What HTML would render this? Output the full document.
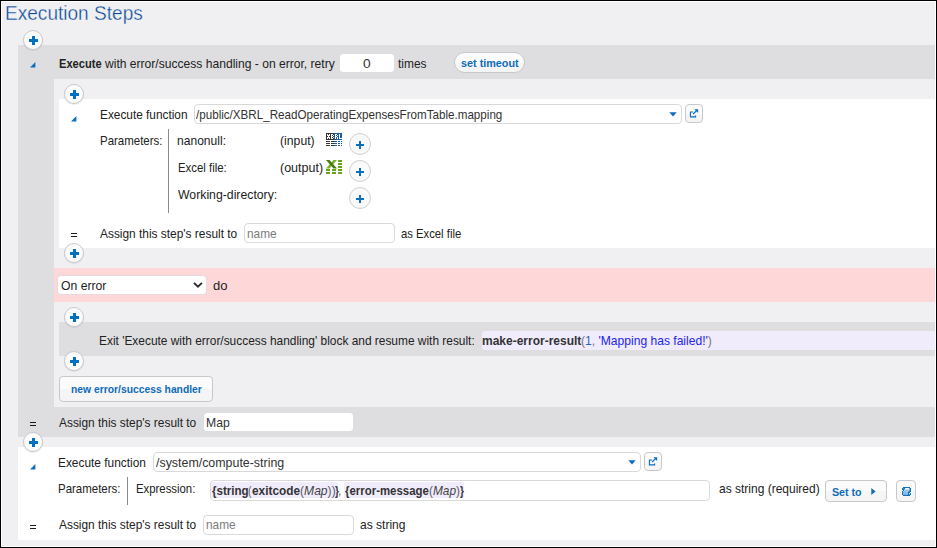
<!DOCTYPE html>
<html><head><meta charset='utf-8'><title>Execution Steps</title>
<style>
html,body{margin:0;padding:0;}
body{width:937px;height:548px;overflow:hidden;background:#000;position:relative;font-family:"Liberation Sans", sans-serif;color:#222;}
.abs{position:absolute;}
#w{position:absolute;left:1px;top:1px;width:935px;height:546px;background:#fff;}
#c{position:absolute;left:2px;top:2px;width:933px;height:544px;background:#f0f0f2;overflow:hidden;}
#o{position:absolute;left:-2px;top:-2px;width:937px;height:548px;}
.b{position:absolute;}
.t{position:absolute;white-space:nowrap;transform-origin:0 0;}
.t b{font-weight:bold;}
.pc{position:absolute;width:18px;height:18px;border:1px solid #c9c9cb;border-radius:50%;background:#fbfbfb;box-shadow:0 1px 1px rgba(0,0,0,0.08);}
.pc svg{position:absolute;left:-1px;top:-1px;}
.pc2{position:absolute;width:20px;height:20px;border:1px solid #cfcfd1;border-radius:50%;background:#f9f9f9;}
.pc2 svg{position:absolute;left:-1px;top:-1px;}
.inp{position:absolute;background:#fff;border-radius:3.5px;box-sizing:border-box;}
.bd{border:1px solid #d9d9dc;border-radius:4px;}
.btn{position:absolute;box-sizing:border-box;border:1px solid #c8c8c8;background:linear-gradient(#fbfbfb 0%,#fbfbfb 50%,#f5f5f5 51%,#f5f5f5 100%);}
</style></head><body>
<div id='w'></div><div id='c'><div id='o'>

<div class='b' style='left:18px;top:45px;width:920px;height:391.5px;background:#dedee0'></div>
<div class='b' style='left:54px;top:79px;width:890px;height:328px;background:#f0f0f2'></div>
<div class='b' style='left:59px;top:99px;width:890px;height:149px;background:#fff'></div>
<div class='b' style='left:54px;top:268px;width:890px;height:34px;background:#fed8d8'></div>
<div class='b' style='left:59px;top:322px;width:890px;height:33.5px;background:#dedee0'></div>
<div class='b' style='left:482px;top:331px;width:460px;height:19px;background:#f0ecfc;border-radius:3px 0 0 3px'></div>
<div class='b' style='left:18px;top:447px;width:920px;height:93px;background:#fff'></div>
<div class='inp' style='left:340px;top:54px;width:54px;height:18px'></div>
<div class='btn' style='left:454px;top:52px;width:71px;height:20.5px;border-radius:10.5px'></div>
<div class='inp bd' style='left:194px;top:104px;width:487.6px;height:20px'></div>
<svg class='abs' style='left:669.4px;top:112px' width='8' height='5' viewBox='0 0 8 5'><path d='M0.3 0.3H7.7L4 4.6Z' fill='#0e6cba'/></svg>
<div class='btn' style='left:685.2px;top:104.1px;width:17.7px;height:19px;border-radius:4px'></div><svg class='abs' style='left:689.00px;top:108.30px' width='11' height='11' viewBox='0 0 11 11'><path d='M4 4H1.45V8.9H6.55V7.4' stroke='#0a6fc0' stroke-width='1.15' fill='none'/><path d='M4.1 6L8.3 1.9' stroke='#0a6fc0' stroke-width='1.25' fill='none'/><path d='M5.4 1.3H9.1V5.1Z' fill='#0a6fc0'/></svg>
<div class='b' style='left:168px;top:129px;width:1px;height:83.5px;background:#8a8a8a'></div>
<svg class='abs' style='left:326px;top:133px' width='16' height='14' viewBox='0 0 16 14' shape-rendering='crispEdges'>
<rect x='0' y='0' width='8' height='7' fill='#333'/><rect x='8' y='0' width='8' height='7' fill='#1a5c9c'/>
<g fill='#fff'>
<path d='M1 1h1v1h1v-1h1v2h-1v1h1v2h-1v-1h-1v1h-1v-2h1v-1h-1z'/>
<path d='M5 1h2v1h1v1h-1v1h1v1h-1v1h-2zM6 2v1h1v-1zM6 4v1h1v-1z'/>
<path d='M9 1h2v1h1v1h-1v1h1v2h-1v-2h-1v2h-1zM10 2v1h1v-1z'/>
<path d='M13 1h1v4h2v1h-3z'/>
</g>
<g fill='#333'><rect x='0' y='8' width='4' height='1'/><rect x='5' y='8' width='3' height='1'/><rect x='0' y='10' width='4' height='1'/><rect x='5' y='10' width='3' height='1'/><rect x='0' y='12' width='4' height='1'/><rect x='5' y='12' width='3' height='1'/></g>
<g fill='#1a5c9c'><rect x='8' y='8' width='3' height='1'/><rect x='12' y='8' width='2' height='1'/><rect x='15' y='8' width='1' height='1'/><rect x='8' y='10' width='3' height='1'/><rect x='12' y='10' width='2' height='1'/><rect x='15' y='10' width='1' height='1'/><rect x='8' y='12' width='3' height='1'/><rect x='12' y='12' width='2' height='1'/><rect x='15' y='12' width='1' height='1'/></g>
</svg>
<svg class='abs' style='left:326px;top:160px' width='16' height='14' viewBox='0 0 16 14'>
<path d='M7.5 0H11L3.5 8.5H0Z' fill='#7fb02c'/>
<path d='M0 0H3.5L11 8.5H7.5Z' fill='#4c7a12'/>
<g fill='#6aa31c' shape-rendering='crispEdges'>
<rect x='12' y='0' width='4' height='2'/><rect x='12' y='3' width='4' height='2'/><rect x='12' y='6' width='4' height='2'/><rect x='12' y='9' width='4' height='2'/><rect x='12' y='12' width='4' height='2'/>
<rect x='0' y='9' width='4' height='2'/><rect x='6' y='9' width='4' height='2'/>
<rect x='0' y='12' width='4' height='2'/><rect x='6' y='12' width='4' height='2'/>
</g></svg>
<div class='pc2' style='left:349px;top:133px'><svg width='22' height='22' viewBox='0 0 22 22'><path d='M10 8h2v3h3v2h-3v3h-2v-3h-3v-2h3z' fill='#0a6fc0'/></svg></div>
<div class='pc2' style='left:349px;top:160px'><svg width='22' height='22' viewBox='0 0 22 22'><path d='M10 8h2v3h3v2h-3v3h-2v-3h-3v-2h3z' fill='#0a6fc0'/></svg></div>
<div class='pc2' style='left:349px;top:187px'><svg width='22' height='22' viewBox='0 0 22 22'><path d='M10 8h2v3h3v2h-3v3h-2v-3h-3v-2h3z' fill='#0a6fc0'/></svg></div>
<div class='inp bd' style='left:244px;top:223px;width:150.6px;height:20px'></div>
<div class='inp' style='left:57.4px;top:275.4px;width:149.2px;height:19.3px;border:1px solid #e6dadf;border-radius:4px'></div>
<svg class='abs' style='left:192px;top:281px' width='12' height='9' viewBox='0 0 12 9'><path d='M1.97 1.87L5.95 5.76L9.93 1.87' stroke='#2b2b2b' stroke-width='1.9' fill='none'/></svg>
<div class='btn' style='left:59px;top:376px;width:153.5px;height:25.5px;border-radius:4px'></div>
<div class='inp' style='left:204px;top:413px;width:149px;height:18px'></div>
<div class='inp bd' style='left:153.2px;top:452px;width:487.5px;height:20px'></div>
<svg class='abs' style='left:628.1px;top:460px' width='8' height='5' viewBox='0 0 8 5'><path d='M0.3 0.3H7.7L4 4.6Z' fill='#0e6cba'/></svg>
<div class='btn' style='left:644.3px;top:452.1px;width:17.7px;height:19px;border-radius:4px'></div><svg class='abs' style='left:648.10px;top:456.30px' width='11' height='11' viewBox='0 0 11 11'><path d='M4 4H1.45V8.9H6.55V7.4' stroke='#0a6fc0' stroke-width='1.15' fill='none'/><path d='M4.1 6L8.3 1.9' stroke='#0a6fc0' stroke-width='1.25' fill='none'/><path d='M5.4 1.3H9.1V5.1Z' fill='#0a6fc0'/></svg>
<div class='b' style='left:127px;top:477px;width:1px;height:28px;background:#8a8a8a'></div>
<div class='inp bd' style='left:210px;top:480px;width:499.5px;height:21px'></div>
<div class='b' style='left:211.2px;top:482px;width:126.6px;height:16px;background:#f0ecfc'></div>
<div class='b' style='left:344.2px;top:482px;width:119.7px;height:16px;background:#f0ecfc'></div>
<div class='btn' style='left:825px;top:480px;width:61.5px;height:22px;border-radius:4px'></div>
<svg class='abs' style='left:871px;top:488px' width='5' height='7' viewBox='0 0 5 7'><path d='M0.3 0L4.6 3.5L0.3 7Z' fill='#0e6cba'/></svg>
<div class='btn' style='left:896px;top:480px;width:20px;height:22px;border-radius:4px'></div><svg class='abs' style='left:902px;top:487px' width='9' height='9' viewBox='0 0 9 9' shape-rendering='crispEdges'><rect x='1' y='0' width='1' height='1' fill='#0f6fc0'/><rect x='2' y='0' width='1' height='1' fill='#0f6fc0'/><rect x='3' y='0' width='1' height='1' fill='#0f6fc0'/><rect x='4' y='0' width='1' height='1' fill='#0f6fc0'/><rect x='5' y='0' width='1' height='1' fill='#0f6fc0'/><rect x='6' y='0' width='1' height='1' fill='#0f6fc0'/><rect x='7' y='0' width='1' height='1' fill='#0f6fc0'/><rect x='0' y='1' width='1' height='1' fill='#0f6fc0'/><rect x='1' y='1' width='1' height='1' fill='#4f97d4'/><rect x='2' y='1' width='1' height='1' fill='#0f6fc0'/><rect x='3' y='1' width='1' height='1' fill='#eef5fc'/><rect x='4' y='1' width='1' height='1' fill='#eef5fc'/><rect x='5' y='1' width='1' height='1' fill='#eef5fc'/><rect x='6' y='1' width='1' height='1' fill='#eef5fc'/><rect x='7' y='1' width='1' height='1' fill='#4f97d4'/><rect x='8' y='1' width='1' height='1' fill='#0f6fc0'/><rect x='0' y='2' width='1' height='1' fill='#0f6fc0'/><rect x='1' y='2' width='1' height='1' fill='#0f6fc0'/><rect x='2' y='2' width='1' height='1' fill='#8fbde6'/><rect x='3' y='2' width='1' height='1' fill='#c4dcf2'/><rect x='4' y='2' width='1' height='1' fill='#c4dcf2'/><rect x='5' y='2' width='1' height='1' fill='#c4dcf2'/><rect x='6' y='2' width='1' height='1' fill='#c4dcf2'/><rect x='7' y='2' width='1' height='1' fill='#8fbde6'/><rect x='8' y='2' width='1' height='1' fill='#0f6fc0'/><rect x='1' y='3' width='1' height='1' fill='#0f6fc0'/><rect x='2' y='3' width='1' height='1' fill='#9cc6ea'/><rect x='3' y='3' width='1' height='1' fill='#9cc6ea'/><rect x='4' y='3' width='1' height='1' fill='#9cc6ea'/><rect x='5' y='3' width='1' height='1' fill='#9cc6ea'/><rect x='6' y='3' width='1' height='1' fill='#9cc6ea'/><rect x='7' y='3' width='1' height='1' fill='#6ea9dd'/><rect x='8' y='3' width='1' height='1' fill='#0f6fc0'/><rect x='0' y='4' width='1' height='1' fill='#0f6fc0'/><rect x='1' y='4' width='1' height='1' fill='#9cc6ea'/><rect x='2' y='4' width='1' height='1' fill='#9cc6ea'/><rect x='3' y='4' width='1' height='1' fill='#9cc6ea'/><rect x='4' y='4' width='1' height='1' fill='#9cc6ea'/><rect x='5' y='4' width='1' height='1' fill='#9cc6ea'/><rect x='6' y='4' width='1' height='1' fill='#6ea9dd'/><rect x='7' y='4' width='1' height='1' fill='#0f6fc0'/><rect x='8' y='4' width='1' height='1' fill='#0f6fc0'/><rect x='0' y='5' width='1' height='1' fill='#0f6fc0'/><rect x='1' y='5' width='1' height='1' fill='#86b9e5'/><rect x='2' y='5' width='1' height='1' fill='#86b9e5'/><rect x='3' y='5' width='1' height='1' fill='#86b9e5'/><rect x='4' y='5' width='1' height='1' fill='#86b9e5'/><rect x='5' y='5' width='1' height='1' fill='#86b9e5'/><rect x='6' y='5' width='1' height='1' fill='#0f6fc0'/><rect x='7' y='5' width='1' height='1' fill='#0f6fc0'/><rect x='0' y='6' width='1' height='1' fill='#0f6fc0'/><rect x='1' y='6' width='1' height='1' fill='#86b9e5'/><rect x='2' y='6' width='1' height='1' fill='#86b9e5'/><rect x='3' y='6' width='1' height='1' fill='#86b9e5'/><rect x='4' y='6' width='1' height='1' fill='#86b9e5'/><rect x='5' y='6' width='1' height='1' fill='#86b9e5'/><rect x='6' y='6' width='1' height='1' fill='#0f6fc0'/><rect x='8' y='6' width='1' height='1' fill='#0f6fc0'/><rect x='0' y='7' width='1' height='1' fill='#0f6fc0'/><rect x='1' y='7' width='1' height='1' fill='#74aee0'/><rect x='2' y='7' width='1' height='1' fill='#74aee0'/><rect x='3' y='7' width='1' height='1' fill='#74aee0'/><rect x='4' y='7' width='1' height='1' fill='#74aee0'/><rect x='5' y='7' width='1' height='1' fill='#74aee0'/><rect x='6' y='7' width='1' height='1' fill='#0f6fc0'/><rect x='7' y='7' width='1' height='1' fill='#4f97d4'/><rect x='8' y='7' width='1' height='1' fill='#0f6fc0'/><rect x='1' y='8' width='1' height='1' fill='#0f6fc0'/><rect x='2' y='8' width='1' height='1' fill='#0f6fc0'/><rect x='3' y='8' width='1' height='1' fill='#0f6fc0'/><rect x='4' y='8' width='1' height='1' fill='#0f6fc0'/><rect x='5' y='8' width='1' height='1' fill='#0f6fc0'/><rect x='6' y='8' width='1' height='1' fill='#0f6fc0'/><rect x='7' y='8' width='1' height='1' fill='#0f6fc0'/></svg>
<div class='inp bd' style='left:203px;top:515px;width:150.6px;height:20px'></div>
<div class='pc' style='left:23px;top:30px'><svg width='20' height='20' viewBox='0 0 20 20' shape-rendering='crispEdges'><path d='M9 6h3v3h3v3h-3v3h-3v-3h-3v-3h3z' fill='#0070c0'/></svg></div>
<div class='pc' style='left:64px;top:84px'><svg width='20' height='20' viewBox='0 0 20 20' shape-rendering='crispEdges'><path d='M9 6h3v3h3v3h-3v3h-3v-3h-3v-3h3z' fill='#0070c0'/></svg></div>
<div class='pc' style='left:64px;top:243px'><svg width='20' height='20' viewBox='0 0 20 20' shape-rendering='crispEdges'><path d='M9 6h3v3h3v3h-3v3h-3v-3h-3v-3h3z' fill='#0070c0'/></svg></div>
<div class='pc' style='left:64px;top:307px'><svg width='20' height='20' viewBox='0 0 20 20' shape-rendering='crispEdges'><path d='M9 6h3v3h3v3h-3v3h-3v-3h-3v-3h3z' fill='#0070c0'/></svg></div>
<div class='pc' style='left:64px;top:351px'><svg width='20' height='20' viewBox='0 0 20 20' shape-rendering='crispEdges'><path d='M9 6h3v3h3v3h-3v3h-3v-3h-3v-3h3z' fill='#0070c0'/></svg></div>
<div class='pc' style='left:23px;top:432px'><svg width='20' height='20' viewBox='0 0 20 20' shape-rendering='crispEdges'><path d='M9 6h3v3h3v3h-3v3h-3v-3h-3v-3h3z' fill='#0070c0'/></svg></div>
<svg class='abs' style='left:29.7px;top:62px' width='6' height='6' viewBox='0 0 6 6'><path d='M5.4 0V5.4H0Z' fill='#0a6fc0'/></svg>
<svg class='abs' style='left:70.8px;top:115.8px' width='6' height='6' viewBox='0 0 6 6'><path d='M5.4 0V5.4H0Z' fill='#0a6fc0'/></svg>
<svg class='abs' style='left:29.8px;top:463.9px' width='6' height='6' viewBox='0 0 6 6'><path d='M5.4 0V5.4H0Z' fill='#0a6fc0'/></svg>
<div class='abs' style='left:71px;top:233px;width:6.2px;height:1px;background:#1a1a1a'></div><div class='abs' style='left:71px;top:236px;width:6.2px;height:1px;background:#1a1a1a'></div>
<div class='abs' style='left:30px;top:422px;width:6.2px;height:1px;background:#1a1a1a'></div><div class='abs' style='left:30px;top:425px;width:6.2px;height:1px;background:#1a1a1a'></div>
<div class='abs' style='left:30px;top:525px;width:6.2px;height:1px;background:#1a1a1a'></div><div class='abs' style='left:30px;top:528px;width:6.2px;height:1px;background:#1a1a1a'></div>
<div class='t' id='t0' style='left:5.09px;top:1.27px;font-size:20.7px;line-height:23.122px;transform:scaleX(0.9215);color:#0b4a96;-webkit-text-stroke:0.35px #f0f0f2;'>Execution Steps</div>
<div class='t' id='t1' style='left:59.02px;top:57.23px;font-size:13px;line-height:14.521px;transform:scaleX(0.8539);'><b>Execute</b></div>
<div class='t' id='t2' style='left:105.44px;top:57.23px;font-size:13px;line-height:14.521px;transform:scaleX(0.9297);'>with error/success handling - on error, retry</div>
<div class='t' id='t3' style='left:398.27px;top:57.23px;font-size:13px;line-height:14.521px;transform:scaleX(0.9170);'>times</div>
<div class='t' id='t4' style='left:363.22px;top:57.23px;font-size:13px;line-height:14.521px;transform:scaleX(1.0586);color:#333;'>0</div>
<div class='t' id='t5' style='left:461.38px;top:57.23px;font-size:10.8px;line-height:12.064px;transform:scaleX(1.0011);color:#0e6cba;font-weight:bold;'>set timeout</div>
<div class='t' id='t6' style='left:99.62px;top:108.23px;font-size:13px;line-height:14.521px;transform:scaleX(0.9100);'>Execute function</div>
<div class='t' id='t7' style='left:196.33px;top:108.23px;font-size:13px;line-height:14.521px;transform:scaleX(0.8943);color:#333;'>/public/XBRL_ReadOperatingExpensesFromTable.mapping</div>
<div class='t' id='t8' style='left:99.76px;top:133.94px;font-size:13px;line-height:14.521px;transform:scaleX(0.8824);'>Parameters:</div>
<div class='t' id='t9' style='left:176.99px;top:133.94px;font-size:13px;line-height:14.521px;transform:scaleX(0.9285);'>nanonull:</div>
<div class='t' id='t10' style='left:280.16px;top:133.94px;font-size:13px;line-height:14.521px;transform:scaleX(0.9416);'>(input)</div>
<div class='t' id='t11' style='left:177.51px;top:160.74px;font-size:13px;line-height:14.521px;transform:scaleX(0.8759);'>Excel file:</div>
<div class='t' id='t12' style='left:280.07px;top:160.74px;font-size:13px;line-height:14.521px;transform:scaleX(0.9606);'>(output)</div>
<div class='t' id='t13' style='left:178.32px;top:187.74px;font-size:13px;line-height:14.521px;transform:scaleX(0.9429);'>Working-directory:</div>
<div class='t' id='t14' style='left:100.04px;top:227.24px;font-size:13px;line-height:14.521px;transform:scaleX(0.9152);'>Assign this step's result to</div>
<div class='t' id='t15' style='left:246.65px;top:227.24px;font-size:13px;line-height:14.521px;transform:scaleX(0.9115);color:#7c7c7c;'>name</div>
<div class='t' id='t16' style='left:400.74px;top:227.24px;font-size:13px;line-height:14.521px;transform:scaleX(0.8677);'>as Excel file</div>
<div class='t' id='t17' style='left:61.19px;top:278.74px;font-size:13px;line-height:14.521px;transform:scaleX(0.9371);'>On error</div>
<div class='t' id='t18' style='left:212.84px;top:278.74px;font-size:13px;line-height:14.521px;transform:scaleX(1.0012);'>do</div>
<div class='t' id='t19' style='left:99.46px;top:333.74px;font-size:13px;line-height:14.521px;transform:scaleX(0.9157);'>Exit 'Execute with error/success handling' block and resume with result:</div>
<div class='t' id='t20' style='left:482.01px;top:333.74px;font-size:13px;line-height:14.521px;transform:scaleX(0.9222);'><b style='color:#333'>make-error-result</b></div>
<div class='t' id='t21' style='left:581.02px;top:333.74px;font-size:13px;line-height:14.521px;transform:scaleX(0.9289);'><span style='color:#777'>(</span><span style='color:#2a62b8'>1</span><span style='color:#777'>, </span><span style='color:#2424ee'>'Mapping has failed!'</span><span style='color:#777'>)</span></div>
<div class='t' id='t22' style='left:71.07px;top:382.73px;font-size:10.8px;line-height:12.064px;transform:scaleX(0.9565);color:#0e6cba;font-weight:bold;'>new error/success handler</div>
<div class='t' id='t23' style='left:59.30px;top:416.24px;font-size:13px;line-height:14.521px;transform:scaleX(0.9152);'>Assign this step's result to</div>
<div class='t' id='t24' style='left:205.85px;top:416.24px;font-size:13px;line-height:14.521px;transform:scaleX(0.9365);color:#333;'>Map</div>
<div class='t' id='t25' style='left:58.47px;top:455.84px;font-size:13px;line-height:14.521px;transform:scaleX(0.9145);'>Execute function</div>
<div class='t' id='t26' style='left:155.82px;top:455.84px;font-size:13px;line-height:14.521px;transform:scaleX(0.9539);color:#333;'>/system/compute-string</div>
<div class='t' id='t27' style='left:58.38px;top:482.24px;font-size:13px;line-height:14.521px;transform:scaleX(0.8824);'>Parameters:</div>
<div class='t' id='t28' style='left:135.88px;top:482.24px;font-size:13px;line-height:14.521px;transform:scaleX(0.8736);'>Expression:</div>
<div class='t' id='t29' style='left:212.30px;top:484.24px;font-size:13px;line-height:14.521px;transform:scaleX(0.8905);'><b style='color:#333'>{string</b></div>
<div class='t' id='t30' style='left:248.08px;top:484.24px;font-size:13px;line-height:14.521px;transform:scaleX(0.7800);color:#5c5c66;'>(</div>
<div class='t' id='t31' style='left:252.00px;top:484.24px;font-size:13px;line-height:14.521px;transform:scaleX(0.9104);'><b style='color:#333'>exitcode</b></div>
<div class='t' id='t32' style='left:299.66px;top:484.24px;font-size:13px;line-height:14.521px;transform:scaleX(0.9312);color:#5c5c66;'>(<i style='color:#444'>Map</i>))</div>
<div class='t' id='t33' style='left:334.90px;top:484.24px;font-size:13px;line-height:14.521px;transform:scaleX(0.7800);'><b style='color:#333'>}</b></div>
<div class='t' id='t34' style='left:337.51px;top:484.24px;font-size:13px;line-height:14.521px;transform:scaleX(0.9000);color:#5c5c66;'>,</div>
<div class='t' id='t35' style='left:345.42px;top:484.24px;font-size:13px;line-height:14.521px;transform:scaleX(0.8793);'><b style='color:#333'>{error-message</b></div>
<div class='t' id='t36' style='left:429.03px;top:484.24px;font-size:13px;line-height:14.521px;transform:scaleX(0.9120);color:#5c5c66;'>(<i style='color:#444'>Map</i>)</div>
<div class='t' id='t37' style='left:460.40px;top:484.24px;font-size:13px;line-height:14.521px;transform:scaleX(0.7800);'><b style='color:#333'>}</b></div>
<div class='t' id='t38' style='left:718.59px;top:482.24px;font-size:13px;line-height:14.521px;transform:scaleX(0.9225);'>as string (required)</div>
<div class='t' id='t39' style='left:831.81px;top:485.83px;font-size:10.8px;line-height:12.064px;transform:scaleX(0.9869);color:#0e6cba;font-weight:bold;'>Set to</div>
<div class='t' id='t40' style='left:59.30px;top:518.24px;font-size:13px;line-height:14.521px;transform:scaleX(0.9152);'>Assign this step's result to</div>
<div class='t' id='t41' style='left:206.15px;top:518.24px;font-size:13px;line-height:14.521px;transform:scaleX(0.9115);color:#7c7c7c;'>name</div>
<div class='t' id='t42' style='left:359.85px;top:518.24px;font-size:13px;line-height:14.521px;transform:scaleX(0.9261);'>as string</div>
</div></div></body></html>
